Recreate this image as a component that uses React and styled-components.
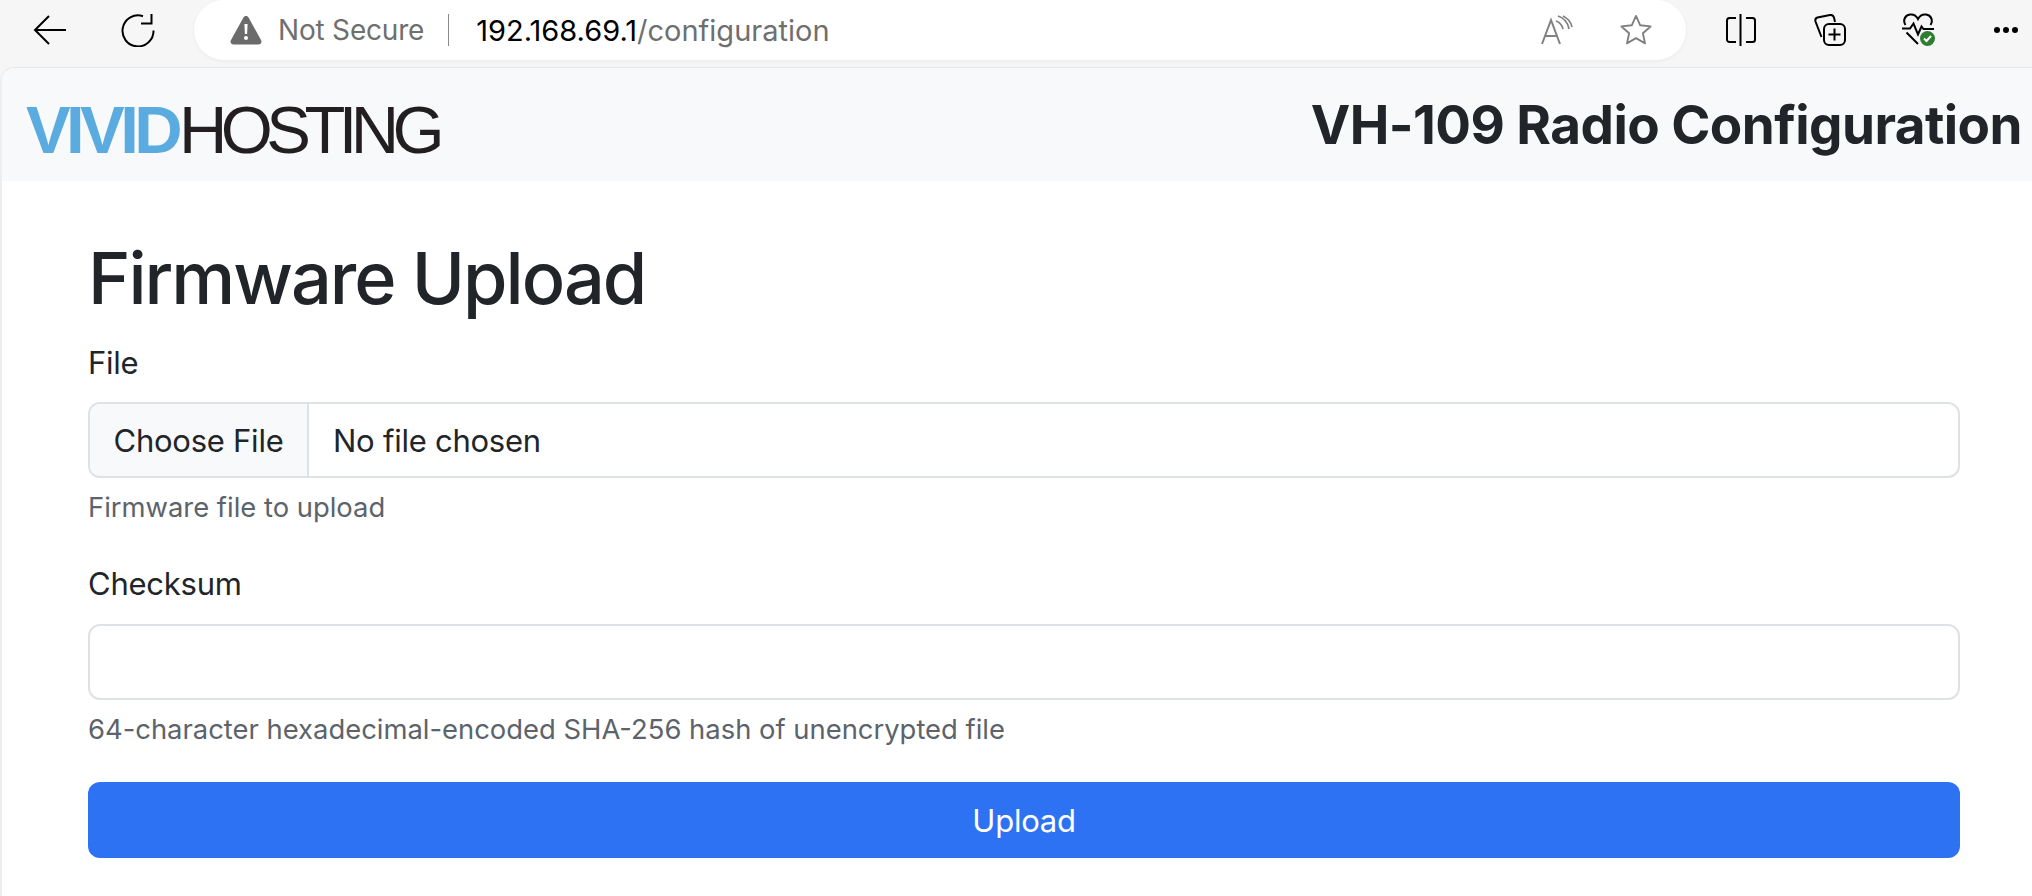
import { createGlobalStyle } from "styled-components";
import styled from "styled-components";

const GlobalStyle = createGlobalStyle`
  html, body {
    margin: 0;
    padding: 0;
    height: 100%;
    background: #ffffff;
    color: #212529;
    font-family: Inter, "Liberation Sans", sans-serif;
    overflow: hidden;
  }
  * { box-sizing: border-box; }
`;

const Page = styled.div`
  width: 2032px;
  height: 896px;
  background: #f6f6f6;
  display: flex;
  flex-direction: column;
`;

const Toolbar = styled.div`
  height: 67px;
  display: flex;
  align-items: flex-start;
  padding-left: 33px;
`;

const NavButton = styled.div`
  width: ${(p) => p.$w}px;
  height: 60px;
  display: flex;
  align-items: center;
  flex-shrink: 0;
`;

const AddressBar = styled.div`
  width: 1492px;
  height: 60px;
  margin-right: 40px;
  background: #fff;
  border-radius: 30px;
  box-shadow: 0 1px 4px rgba(0, 0, 0, 0.05);
  display: flex;
  align-items: center;
  padding: 0 34px 0 36px;
  flex-shrink: 0;
`;

const SecurityText = styled.span`
  font-size: 28px;
  letter-spacing: -0.2px;
  color: #6f6f6f;
  margin-left: 16px;
`;

const Divider = styled.span`
  width: 1px;
  height: 32px;
  background: #8a8a8a;
  margin: 0 27px 0 24px;
`;

const Url = styled.span`
  font-size: 29px;
  color: #000;
  flex: 1;
`;

const UrlPath = styled.span`
  color: #6f6f6f;
`;

const ToolIcons = styled.div`
  display: flex;
  align-items: center;
  gap: 47px;
`;

const Card = styled.div`
  flex: 1;
  background: #fff;
  border-top: 1px solid #e6e6e6;
  border-left: 2px solid #eeeeee;
  border-top-left-radius: 14px;
  overflow: hidden;
`;

const Header = styled.header`
  height: 113px;
  background: #f8f9fa;
  display: flex;
  align-items: center;
  justify-content: space-between;
  padding: 0 10px 0 24px;
`;

const Logo = styled.div`
  font-family: "Liberation Sans", Arial, sans-serif;
  font-size: 67px;
  letter-spacing: -6.6px;
  line-height: 1;
  margin-top: 10px;
  color: #231f20;
`;

const LogoAccent = styled.span`
  color: #5aace0;
  font-weight: 700;
  letter-spacing: -4.6px;
  margin-right: 1px;
`;

const Title = styled.div`
  font-size: 53px;
  font-weight: 700;
  letter-spacing: -0.55px;
  color: #212529;
`;

const Main = styled.main`
  padding: 0 72px 0 86px;
  display: flex;
  flex-direction: column;
`;

const Heading = styled.h1`
  margin: 57px 0 0;
  font-size: 72px;
  font-weight: 500;
  letter-spacing: -2px;
  line-height: 80px;
`;

const Label = styled.label`
  display: block;
  font-size: 31px;
  letter-spacing: -0.25px;
  line-height: 48px;
  margin-top: ${(p) => p.$mt}px;
`;

const FileField = styled.div`
  height: 76px;
  margin-top: 15px;
  border: 2px solid #dee2e6;
  border-radius: 12px;
  display: flex;
  align-items: center;
  font-size: 31px;
  letter-spacing: -0.25px;
  overflow: hidden;
`;

const FileButton = styled.div`
  height: 100%;
  width: 219px;
  background: #f8f9fa;
  border-right: 2px solid #dee2e6;
  display: flex;
  align-items: center;
  justify-content: center;
`;

const FileName = styled.span`
  margin-left: 24px;
`;

const TextField = styled.input`
  display: block;
  width: 100%;
  height: 76px;
  margin-top: 16px;
  border: 2px solid #dee2e6;
  border-radius: 12px;
  background: #fff;
  outline: none;
`;

const Help = styled.div`
  margin-top: 8px;
  font-size: 27.4px;
  line-height: 42px;
  color: #5c636a;
`;

const Submit = styled.button`
  height: 76px;
  margin-top: 32px;
  border: 0;
  border-radius: 12px;
  background: #2d72f3;
  color: #fff;
  font-family: inherit;
  font-size: 31px;
  letter-spacing: -0.25px;
`;

const BackIcon = () => (
  <svg width="34" height="30" viewBox="0 0 34 30" fill="none" stroke="#000" strokeWidth="2">
    <path d="M33 15H2M16 1 2 15l14 14" />
  </svg>
);

const ReloadIcon = () => (
  <svg width="34" height="34" viewBox="0 0 34 34" fill="none" stroke="#000" strokeWidth="2">
    <path d="M22 3.2A15.5 15.5 0 1 0 32.5 17.5" />
    <path d="M30.5 1v9.500H20" />
  </svg>
);

const WarnIcon = () => (
  <svg width="32" height="30" viewBox="0 0 32 30">
    <path d="M16 1c1.200 0 2 .6 2.700 1.800L31 25c1.200 2.400 0 4.500-2.700 4.500H3.700C1 29.500-.2 27.400 1 25L13.300 2.800C14 1.600 14.800 1 16 1z" fill="#6b6b6b" />
    <path d="M14.400 9h3.200l-.5 10h-2.200zM16 21a2 2 0 1 1 0 4 2 2 0 0 1 0-4z" fill="#fff" />
  </svg>
);

const ReadIcon = () => (
  <svg width="32" height="30" viewBox="0 0 32 30" fill="none" stroke="#808080" strokeWidth="2">
    <path d="M1 29 10 5l9 24M4.500 21h11" />
    <path d="M17 1c6 2 10 7 11 13M15 6c3 1 6 4 7 8" strokeWidth="1.800" />
    <path d="M22 1c4 2 8 6 9 11" strokeWidth="1.600" />
  </svg>
);

const StarIcon = () => (
  <svg width="32" height="32" viewBox="0 0 34 34" fill="none" stroke="#808080" strokeWidth="2" strokeLinejoin="round">
    <path d="m17 2 4.500 10 11 1.200-8.200 7.300 2.300 10.700L17 25.700l-9.600 5.500 2.300-10.700-8.200-7.300 11-1.200z" />
  </svg>
);

const SplitIcon = () => (
  <svg width="30" height="32" viewBox="0 0 30 32" fill="none" stroke="#000" strokeWidth="2">
    <path d="M10 4H3.500A2.500 2.500 0 0 0 1 6.500v19A2.500 2.500 0 0 0 3.500 28H10M20 4h6.500A2.500 2.500 0 0 1 29 6.500v19a2.500 2.500 0 0 1-2.500 2.500H20M14.500 0v32" />
  </svg>
);

const CollectionIcon = () => (
  <svg width="32" height="32" viewBox="0 0 32 32" fill="none" stroke="#000" strokeWidth="2">
    <path d="M7.500 23 1.500 7.500C1 5.500 1.800 4 3.500 3.500L16 1c2-.3 3.400.6 4 2.500l1 4.500" />
    <rect x="10" y="10" width="21" height="21" rx="5" />
    <path d="M20.500 14.500v12M14.500 20.500h12" />
  </svg>
);

const HealthIcon = () => (
  <svg width="34" height="34" viewBox="0 0 34 34" fill="none">
    <path d="M3.500 12C.5 7.500 3 2 8 1.500c3.500-.4 6.500 1.500 8 4.500 1.500-3 4.500-4.900 8-4.500C29 2 31.500 7.500 28.500 12" stroke="#000" strokeWidth="2" />
    <path d="M0 15.500h8l3.500-5 4.500 11 3.500-8 2 2.500h10.500M4.500 19.500 16 31" stroke="#000" strokeWidth="2" />
    <circle cx="25.500" cy="25.500" r="7.500" fill="#2f7d32" />
    <path d="m22 25.500 2.500 2.500 4.500-5" stroke="#fff" strokeWidth="2" />
  </svg>
);

const MoreIcon = () => (
  <svg width="26" height="8" viewBox="0 0 26 8" fill="#000">
    <circle cx="4" cy="4" r="3" />
    <circle cx="13" cy="4" r="3" />
    <circle cx="22" cy="4" r="3" />
  </svg>
);

function App() {
  return (
    <Page>
      <GlobalStyle />
      <Toolbar>
        <NavButton $w={88}>
          <BackIcon />
        </NavButton>
        <NavButton $w={73}>
          <ReloadIcon />
        </NavButton>
        <AddressBar>
          <WarnIcon />
          <SecurityText>Not Secure</SecurityText>
          <Divider />
          <Url>
            192.168.69.1<UrlPath>/configuration</UrlPath>
          </Url>
          <ToolIcons>
            <ReadIcon />
            <StarIcon />
          </ToolIcons>
        </AddressBar>
        <NavButton $w={88}>
          <SplitIcon />
        </NavButton>
        <NavButton $w={88}>
          <CollectionIcon />
        </NavButton>
        <NavButton $w={91}>
          <HealthIcon />
        </NavButton>
        <NavButton $w={26}>
          <MoreIcon />
        </NavButton>
      </Toolbar>
      <Card>
        <Header>
          <Logo>
            <LogoAccent>VIVID</LogoAccent>HOSTING
          </Logo>
          <Title>VH-109 Radio Configuration</Title>
        </Header>
        <Main>
          <Heading>Firmware Upload</Heading>
          <Label $mt={21}>File</Label>
          <FileField>
            <FileButton>Choose File</FileButton>
            <FileName>No file chosen</FileName>
          </FileField>
          <Help>Firmware file to upload</Help>
          <Label $mt={32}>Checksum</Label>
          <TextField />
          <Help>64-character hexadecimal-encoded SHA-256 hash of unencrypted file</Help>
          <Submit>Upload</Submit>
        </Main>
      </Card>
    </Page>
  );
}

export default App;
